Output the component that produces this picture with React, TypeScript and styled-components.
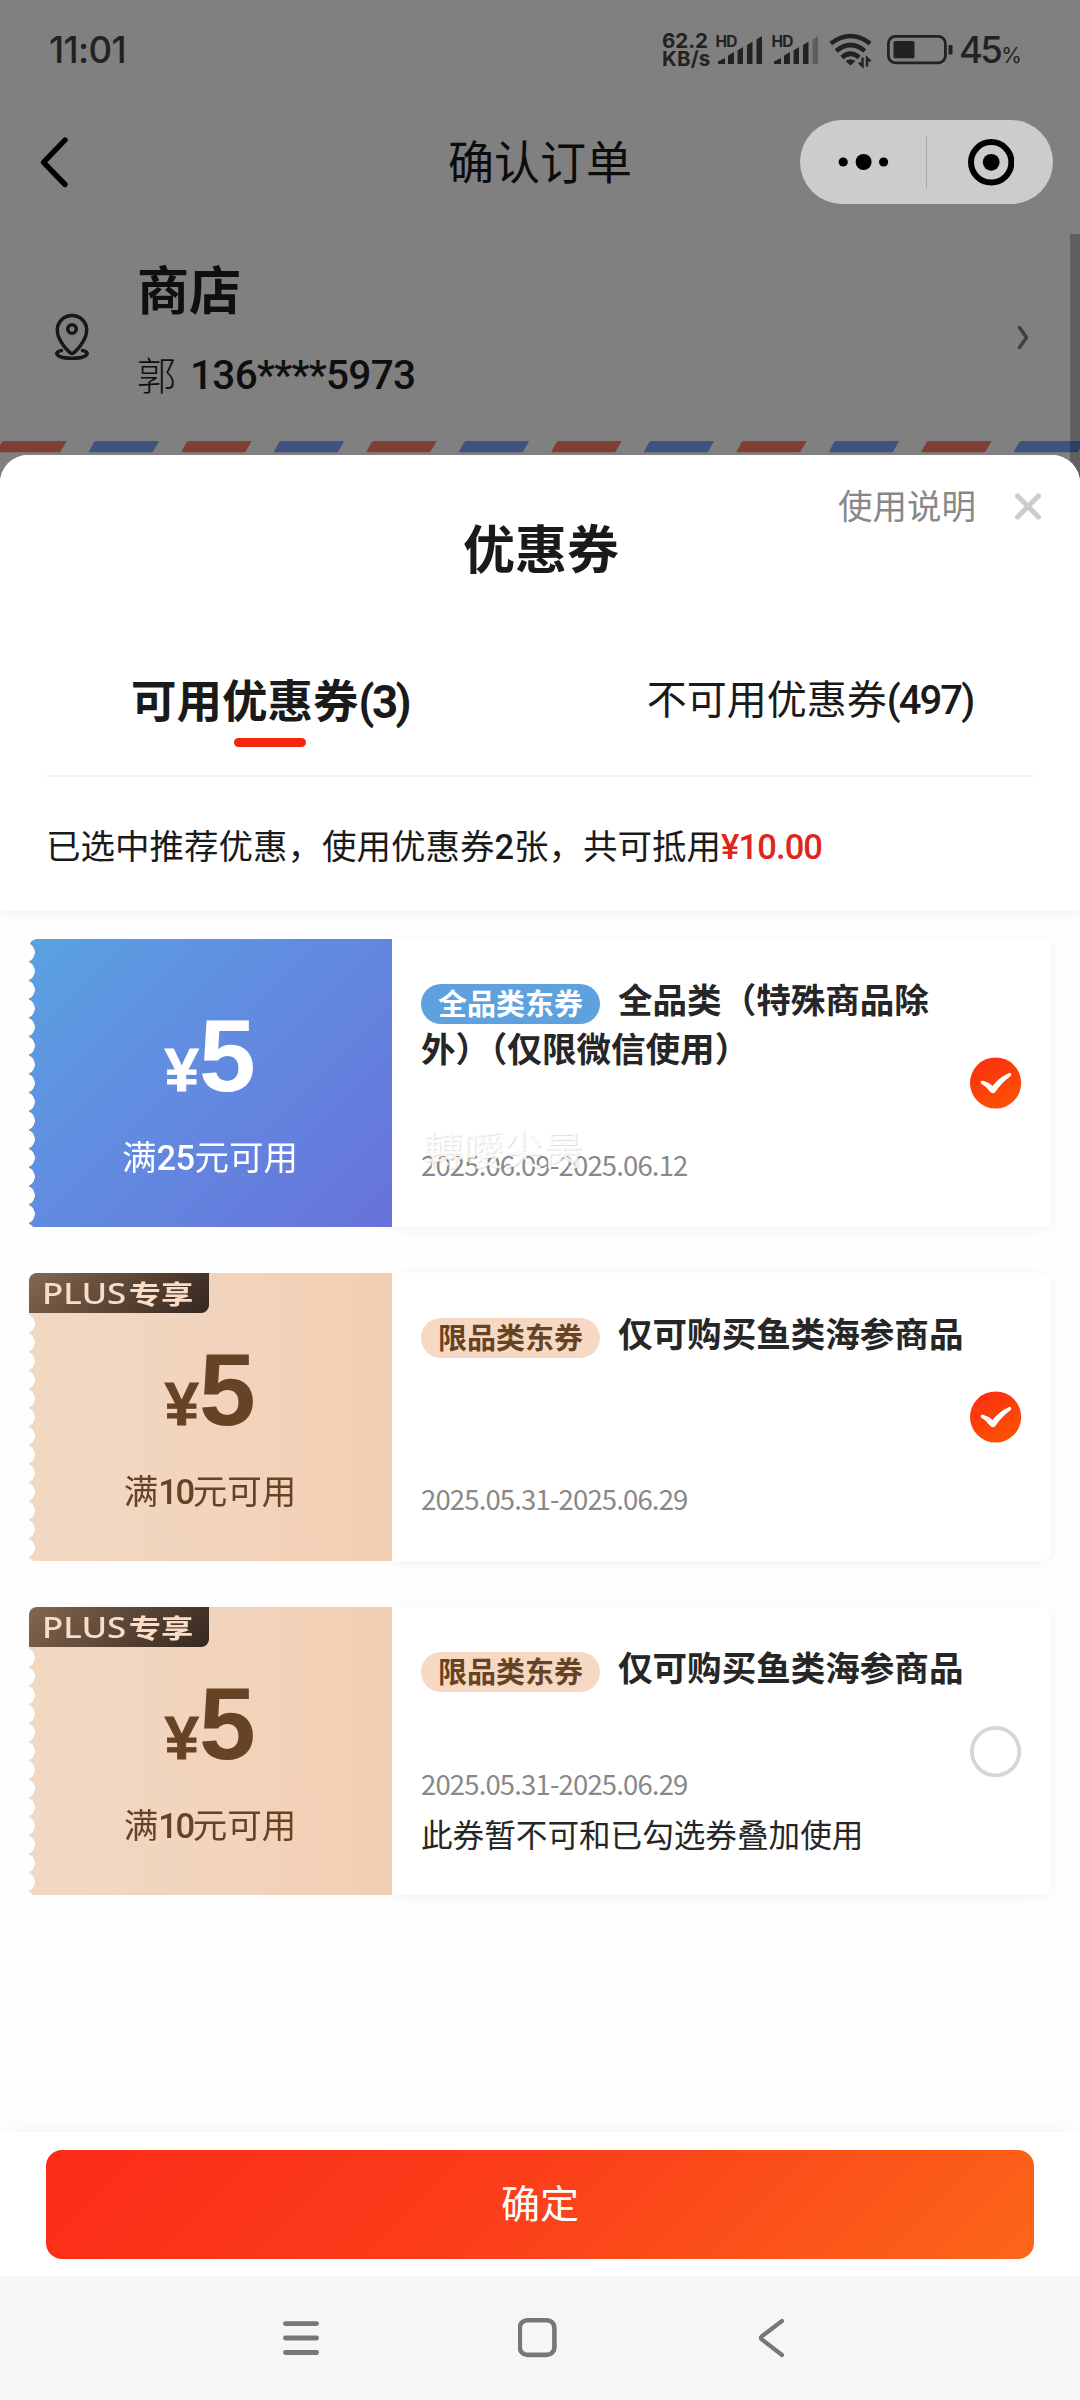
import React from "react";
import styled, { createGlobalStyle } from "styled-components";

const CJK = `"Noto Sans CJK SC", "Noto Sans", sans-serif`;

const GlobalStyle = createGlobalStyle`
  *, *::before, *::after { box-sizing: border-box; }
  html, body { margin: 0; padding: 0; }
  body { width: 1080px; background: #808080; font-family: ${CJK}; }
  svg { display: block; flex: none; }
`;

const Screen = styled.main`
  position: relative;
  display: flex;
  flex-direction: column;
  width: 1080px;
  height: 2400px;
  overflow: hidden;
  background: #808080;
  color: #1a1a1a;
`;

/* ---------- status bar ---------- */

const StatusBar = styled.header`
  display: flex;
  align-items: center;
  justify-content: space-between;
  height: 100px;
  padding: 0 61px 0 49px;
  color: #222;
`;

const Clock = styled.span`
  font: 500 36.5px/40px Inter, sans-serif;
  letter-spacing: -0.6px;
`;

const StatusIcons = styled.div`
  display: flex;
  align-items: center;
`;

const NetSpeed = styled.div`
  width: 52px;
  margin-right: 1px;
  font: 700 20.5px/18.5px Inter, sans-serif;
  white-space: nowrap;
`;

const SpeedLine = styled.div<{ $gap: number }>`
  letter-spacing: ${(p) => p.$gap}px;
`;

const BatteryLevel = styled.div`
  display: flex;
  align-items: baseline;
  width: 60px;
  margin-left: 6px;
  font: 500 36.5px/40px Inter, sans-serif;
  letter-spacing: -2.6px;
`;

const Percent = styled.span`
  margin-left: 1px;
  font: 400 21px/24px Inter, sans-serif;
`;

/* ---------- mini program navigation ---------- */

const NavBar = styled.nav`
  display: grid;
  grid-template-columns: 280px 1fr 280px;
  align-items: center;
  height: 124px;
  color: #0c0c0c;
`;

const BackButton = styled.div`
  padding-left: 38px;
`;

const PageTitle = styled.h1`
  margin: 0 0 6px;
  text-align: center;
  font: 400 46px/60px ${CJK};
`;

const Capsule = styled.div`
  display: grid;
  grid-template-columns: 126px 1px 1fr;
  align-items: center;
  justify-items: center;
  width: 253px;
  height: 84px;
  border-radius: 42px;
  background: #ccc;
`;

const CapsuleDivider = styled.span`
  width: 1px;
  height: 52px;
  background: #a6a6a6;
`;

/* ---------- delivery address ---------- */

const Address = styled.section`
  display: flex;
  align-items: center;
  height: 217px;
  padding: 8px 49px 0 54px;
  color: #0f0f0f;
`;

const AddressText = styled.div`
  flex: 1;
  margin-left: 44px;
`;

const StoreName = styled.h2`
  margin: -4px 0 10px;
  font: 700 52px/70px ${CJK};
`;

const Contact = styled.div`
  display: flex;
  align-items: center;
  gap: 14px;
  height: 84px;
  font: 300 39px/60px ${CJK};
`;

const Recipient = styled.span`
  margin-top: -4px;
`;

const Phone = styled.span`
  font: 500 40.5px/60px Roboto, sans-serif;
  letter-spacing: -0.7px;
`;

const PageScrollbar = styled.div`
  position: absolute;
  top: 234px;
  right: 0;
  width: 10px;
  height: 260px;
  background: rgba(0, 0, 0, 0.25);
`;

/* ---------- bottom sheet ---------- */

const Sheet = styled.section`
  position: relative;
  display: flex;
  flex-direction: column;
  height: 1821px;
  margin-top: 2px;
  border-radius: 28px 28px 0 0;
  background: #fefefe;
  overflow: hidden;
`;

const SheetTop = styled.div`
  height: 456px;
  background: #fff;
  box-shadow: 0 2px 14px rgba(0, 0, 0, 0.055);
`;

const SheetHeader = styled.header`
  display: grid;
  grid-template-columns: 1fr 200px 1fr;
  height: 180px;
`;

const SheetTitle = styled.h2`
  grid-column: 2;
  margin: 57px 0 0;
  padding-left: 2px;
  text-align: center;
  white-space: nowrap;
  font: 700 52px/70px ${CJK};
`;

const SheetActions = styled.div`
  display: flex;
  align-items: center;
  justify-content: flex-end;
  gap: 37px;
  height: 60px;
  margin-top: 21px;
  padding-right: 37px;
  color: #888;
`;

const HelpLink = styled.span`
  margin-top: -4px;
  font: 400 34.5px/56px ${CJK};
`;

const Tabs = styled.div`
  display: grid;
  grid-template-columns: 1fr 1fr;
  height: 142px;
  margin: 0 46px;
  border-bottom: 2px solid #f3f3f3;
`;

const Tab = styled.div<{ $active?: boolean }>`
  display: flex;
  flex-direction: column;
  align-items: center;
  padding-top: ${(p) => (p.$active ? 30 : 29)}px;
  padding-left: ${(p) => (p.$active ? 0 : 46)}px;
  padding-right: ${(p) => (p.$active ? 46 : 0)}px;
  white-space: nowrap;
  font: ${(p) => (p.$active ? "700 45.5px/66px" : "400 40px/66px")} ${CJK};
`;

const TabUnderline = styled.span`
  width: 72px;
  height: 9px;
  margin-top: 2px;
  border-radius: 5px;
  background: #f2270c;
`;

const Num = styled.span<{ $gap?: number; $heavy?: boolean }>`
  font-family: Roboto, sans-serif;
  font-weight: ${(p) => (p.$heavy ? 700 : 500)};
  letter-spacing: ${(p) => p.$gap ?? 0}px;
`;

const Summary = styled.p`
  margin: 0;
  padding: 33px 46px 0;
  font: 400 34.5px/68px ${CJK};
`;

const Saving = styled(Num)`
  color: #e1251b;
`;

/* ---------- coupons ---------- */

const CouponList = styled.div`
  display: flex;
  flex: 1;
  flex-direction: column;
  gap: 46px;
  padding: 28px 29px 0;
`;

const Card = styled.article`
  position: relative;
  display: flex;
  height: 288px;
  border-radius: 8px 10px 10px 8px;
`;

type Tone = "blue" | "plus";

const Stub = styled.div<{ $tone: Tone }>`
  display: flex;
  flex-direction: column;
  align-items: center;
  width: 363px;
  padding: 63px 1px 0 0;
  border-radius: 8px 0 0 0;
  color: ${(p) => (p.$tone === "blue" ? "#fff" : "#674326")};
  background: ${(p) =>
    p.$tone === "blue"
      ? "linear-gradient(135deg, #5aa1e1 0%, #6289e0 50%, #6872da 100%)"
      : "linear-gradient(90deg, #f2d8c2 0%, #f2d3bb 60%, #f2ceb2 100%)"};
  mask: radial-gradient(circle 10px at -4px 9.35px, transparent 9.5px, #000 10px) 0 4px / 100% 18.7px;
`;

const Amount = styled.div`
  display: flex;
  align-items: baseline;
  height: 108px;
  font: 700 102px/108px "Liberation Sans", sans-serif;
`;

const Yen = styled.span`
  font-size: 62px;
  -webkit-text-stroke: 0.8px currentColor;
`;

const Condition = styled.div`
  margin-top: 18px;
  font: 400 34.5px/54px ${CJK};
`;

const PlusBadge = styled.div`
  position: absolute;
  top: 0;
  left: 0;
  display: flex;
  align-items: center;
  width: 180px;
  height: 40px;
  padding: 0 0 1px 13px;
  border-radius: 8px 0 8px 0;
  background: linear-gradient(135deg, #836750 0%, #35271e 100%);
  color: #fbdcc5;
`;

const PlusText = styled.span`
  display: flex;
  align-items: center;
  transform: scaleX(1.22);
  transform-origin: 0 50%;
  white-space: nowrap;
  font: 700 26.5px/38px ${CJK};
`;

const PlusLatin = styled.span`
  font: 500 28.5px/38px "Noto Sans", sans-serif;
  margin-right: 2px;
`;

const Detail = styled.div`
  display: flex;
  flex: 1;
  align-items: center;
  padding: 37px 29px 37px 29px;
  border-radius: 0 10px 10px 0;
  background: #fff;
  box-shadow: 0 2px 14px rgba(0, 0, 0, 0.05);
`;

const DetailText = styled.div`
  position: relative;
  display: flex;
  flex-direction: column;
  justify-content: space-between;
  width: 549px;
  height: 214px;
  color: #262626;
`;

const CouponTitle = styled.h3`
  margin: -2px 0 0;
  font: 700 34.55px/49px ${CJK};
`;

const Tag = styled.span<{ $tone: Tone }>`
  display: inline-block;
  width: 179px;
  height: 40px;
  margin: 0 18px -6px 0;
  border-radius: 20px;
  text-align: center;
  vertical-align: -1.5px;
  font: 700 29px/37px ${CJK};
  color: ${(p) => (p.$tone === "blue" ? "#fff" : "#674326")};
  background: ${(p) => (p.$tone === "blue" ? "#5fa1df" : "#f7d9c3")};
`;

const Validity = styled.div`
  padding-bottom: 2px;
  color: #888;
  font: 400 27.5px/47px ${CJK};
  letter-spacing: -0.85px;
`;

const Note = styled.div`
  font: 400 31.6px/49px ${CJK};
`;

const Toast = styled.span`
  position: absolute;
  left: 2px;
  bottom: 14px;
  color: rgba(255, 255, 255, 0.85);
  text-shadow: 1px 1px 1px rgba(0, 0, 0, 0.13);
  font: 400 40px/56px "Noto Sans CJK TC", sans-serif;
`;

const Selector = styled.span`
  display: block;
  flex: none;
`;

/* ---------- footer ---------- */

const Footer = styled.footer`
  height: 144px;
  padding: 18px 46px;
  background: #fff;
  box-shadow: 0 -2px 18px rgba(0, 0, 0, 0.04);
`;

const ConfirmButton = styled.button`
  display: block;
  width: 100%;
  height: 109px;
  padding: 0 0 6px;
  border: 0;
  border-radius: 16px;
  background: linear-gradient(135deg, #fc2b18 0%, #fb3d1a 45%, #fb6619 100%);
  color: #fff;
  font: 400 39px/103px ${CJK};
`;

const SystemNav = styled.nav`
  display: flex;
  align-items: center;
  justify-content: space-between;
  height: 124px;
  padding: 0 293px 0 281px;
  background: #f6f6f6;
`;

/* ---------- icons ---------- */

function Signal({ weak }: { weak?: boolean }) {
  const bars = [
    [3, 58, 7],
    [13, 52, 6],
    [22.5, 47, 5.5],
    [32, 41.5, 5.5],
    [41.5, 36, 5.5],
  ];
  return (
    <svg width="56" height="40" viewBox="0 30 56 40">
      <text x="0.5" y="46.5" fontFamily="Inter, sans-serif" fontSize="15.5" fontWeight="700" fill="#222" textLength="22">
        HD
      </text>
      {bars.map(([x, y, w], i) => (
        <path
          key={x}
          d={`M${x} ${y + 3.5} L${x + w} ${y} V64 H${x} Z`}
          fill={weak && i === 4 ? "#5e5e5e" : "#222"}
        />
      ))}
    </svg>
  );
}

const WifiBox = styled.span`
  margin-left: 2px;
`;

function Wifi() {
  return (
    <WifiBox>
      <svg width="44" height="40" viewBox="0 30 44 40" fill="none" stroke="#222" strokeWidth="4.6">
        <path d="M1.8 43.5 Q21.5 28.5 41.2 43.5" />
        <path d="M7.2 51 Q21.5 39 35.8 51" />
        <path d="M12.8 57.5 Q21.5 50 30.2 57.5" />
        <path d="M16.5 61 Q21.5 57.5 26.5 61 L21.5 65.5 Z" fill="#222" stroke="none" />
        <g strokeWidth="2.4">
          <path d="M33.5 57.5 V66 L30 62.6" />
          <path d="M38 66.5 V58 L41.6 61.4" />
        </g>
      </svg>
    </WifiBox>
  );
}

const BatteryBox = styled.span`
  margin-left: 14px;
`;

function Battery() {
  return (
    <BatteryBox>
      <svg width="66" height="30" viewBox="0 0 66 30">
        <rect x="1.4" y="1.4" width="57" height="26.4" rx="7" fill="none" stroke="#222" strokeWidth="2.8" />
        <rect x="6.5" y="6" width="21" height="17.3" rx="1.5" fill="#222" />
        <rect x="61.5" y="10" width="4" height="9.5" rx="1.2" fill="#222" />
      </svg>
    </BatteryBox>
  );
}

function Check() {
  return (
    <svg width="52" height="52" viewBox="0 0 52 52">
      <defs>
        <linearGradient id="checkFill" x1="0.2" y1="0" x2="0.8" y2="1">
          <stop offset="0" stopColor="#fb2e10" />
          <stop offset="1" stopColor="#fb5404" />
        </linearGradient>
      </defs>
      <circle cx="25.6" cy="26" r="25.6" fill="url(#checkFill)" />
      <path
        d="M10.8 26.2 Q10.2 23.4 13 23.8 Q18.4 25.2 22.6 29 Q29.1 20.5 39.2 16 Q42.2 15.8 40.8 19 Q31.8 25.4 25.2 35.2 Q22.4 37.4 20 34.8 Q16 29 10.8 26.2 Z"
        fill="#fff"
      />
    </svg>
  );
}

function EmptyCircle() {
  return (
    <svg width="52" height="52" viewBox="0 0 52 52">
      <circle cx="25.6" cy="26.6" r="23.7" fill="none" stroke="#d6d6d6" strokeWidth="3.8" />
    </svg>
  );
}

function Airmail() {
  return (
    <svg width="1080" height="12" viewBox="0 0 1080 12">
      {Array.from({ length: 12 }, (_, i) => (
        <path
          key={i}
          transform={`translate(${-3.4 + i * 92.5} 0)`}
          d="M7.5 0 H69 Q70.2 0 69.6 1 L64.2 10.2 Q63.8 11.3 62.4 11.3 H1 Q-0.4 11.3 0.2 10 L4.8 1.6 Q5.6 0 7.5 0 Z"
          fill={i % 2 ? "#3f5380" : "#7f3f35"}
        />
      ))}
    </svg>
  );
}

/* ---------- data ---------- */

interface Coupon {
  tone: Tone;
  value: number;
  threshold: number;
  tag: string;
  title: string;
  validity: string;
  note?: string;
  toast?: string;
  selected: boolean;
}

const coupons: Coupon[] = [
  {
    tone: "blue",
    value: 5,
    threshold: 25,
    tag: "全品类东券",
    title: "全品类（特殊商品除外）（仅限微信使用）",
    validity: "2025.06.09-2025.06.12",
    toast: "轉噯尖昺",
    selected: true,
  },
  {
    tone: "plus",
    value: 5,
    threshold: 10,
    tag: "限品类东券",
    title: "仅可购买鱼类海参商品",
    validity: "2025.05.31-2025.06.29",
    selected: true,
  },
  {
    tone: "plus",
    value: 5,
    threshold: 10,
    tag: "限品类东券",
    title: "仅可购买鱼类海参商品",
    validity: "2025.05.31-2025.06.29",
    note: "此券暂不可和已勾选券叠加使用",
    selected: false,
  },
];

function CouponCard({ coupon }: { coupon: Coupon }) {
  return (
    <Card>
      <Stub $tone={coupon.tone}>
        <Amount>
          <Yen>¥</Yen>
          {coupon.value}
        </Amount>
        <Condition>
          满<Num $gap={coupon.tone === "plus" ? -2.4 : -0.6}>{coupon.threshold}</Num>元可用
        </Condition>
      </Stub>
      {coupon.tone === "plus" && (
        <PlusBadge>
          <PlusText>
            <PlusLatin>PLUS</PlusLatin>专享
          </PlusText>
        </PlusBadge>
      )}
      <Detail>
        <DetailText>
          <CouponTitle>
            <Tag $tone={coupon.tone}>{coupon.tag}</Tag>
            {coupon.title}
          </CouponTitle>
          <div>
            <Validity>{coupon.validity}</Validity>
            {coupon.note && <Note>{coupon.note}</Note>}
          </div>
          {coupon.toast && <Toast>{coupon.toast}</Toast>}
        </DetailText>
        <Selector>{coupon.selected ? <Check /> : <EmptyCircle />}</Selector>
      </Detail>
    </Card>
  );
}

export default function App() {
  return (
    <Screen>
      <GlobalStyle />
      <StatusBar>
        <Clock>11:01</Clock>
        <StatusIcons>
          <NetSpeed>
            <SpeedLine $gap={0}>62.2</SpeedLine>
            <SpeedLine $gap={0.2}>KB/s</SpeedLine>
          </NetSpeed>
          <Signal />
          <Signal weak />
          <Wifi />
          <Battery />
          <BatteryLevel>
            45<Percent>%</Percent>
          </BatteryLevel>
        </StatusIcons>
      </StatusBar>

      <NavBar>
        <BackButton>
          <svg width="32" height="54" viewBox="0 0 32 54" fill="none" stroke="#000" strokeWidth="5.4" strokeLinecap="round" strokeLinejoin="round">
            <path d="M27 5 L5.5 27.3 L27 49.5" />
          </svg>
        </BackButton>
        <PageTitle>确认订单</PageTitle>
        <Capsule>
          <svg width="52" height="20" viewBox="0 0 52 20">
            <circle cx="6.2" cy="10" r="4.6" />
            <circle cx="26.6" cy="10" r="8" />
            <circle cx="46.6" cy="10" r="4.6" />
          </svg>
          <CapsuleDivider />
          <svg width="48" height="48" viewBox="0 0 48 48">
            <circle cx="25.2" cy="24.3" r="20.2" fill="none" stroke="#000" strokeWidth="6" />
            <circle cx="25.2" cy="24.3" r="8.4" />
          </svg>
        </Capsule>
      </NavBar>

      <Address>
        <svg width="39" height="50" viewBox="0 0 39 50" fill="none" stroke="#171717" strokeWidth="3.5" strokeLinecap="round" strokeLinejoin="round">
          <path d="M18 41.5 C15.5 41.5 3.3 28.5 3.3 18.2 C3.3 9.8 9.9 3.6 18 3.6 S32.7 9.8 32.7 18.2 C32.7 28.5 20.5 41.5 18 41.5 Z" />
          <circle cx="18" cy="17" r="4.3" />
          <path d="M7.5 38.5 C-1 40 2 46.3 18 46.3 S37 40 28.5 38.5" />
        </svg>
        <AddressText>
          <StoreName>商店</StoreName>
          <Contact>
            <Recipient>郭</Recipient>
            <Phone>136****5973</Phone>
          </Contact>
        </AddressText>
        <svg width="14" height="28" viewBox="0 0 14 28" fill="none" stroke="#3e3e3e" strokeWidth="3.4" strokeLinecap="round" strokeLinejoin="round">
          <path d="M2.5 4.5 L9.6 14.5 L2.5 24.5" />
        </svg>
      </Address>
      <Airmail />
      <PageScrollbar />

      <Sheet>
        <SheetTop>
          <SheetHeader>
            <SheetTitle>优惠券</SheetTitle>
            <SheetActions>
              <HelpLink>使用说明</HelpLink>
              <svg width="30" height="30" viewBox="0 0 30 30" stroke="#ccc" strokeWidth="5" strokeLinecap="round">
                <path d="M4.5 5 L25.5 26 M25.5 5 L4.5 26" />
              </svg>
            </SheetActions>
          </SheetHeader>
          <Tabs>
            <Tab $active>
              <span>
                可用优惠券<Num $heavy $gap={-2.5}>(3)</Num>
              </span>
              <TabUnderline />
            </Tab>
            <Tab>
              <span>
                不可用优惠券<Num $gap={-1.9}>(497)</Num>
              </span>
            </Tab>
          </Tabs>
          <Summary>
            已选中推荐优惠，使用优惠券<Num>2</Num>张，共可抵用<Saving $gap={-0.9}>¥10.00</Saving>
          </Summary>
        </SheetTop>
        <CouponList>
          {coupons.map((c, i) => (
            <CouponCard key={i} coupon={c} />
          ))}
        </CouponList>
        <Footer>
          <ConfirmButton>确定</ConfirmButton>
        </Footer>
      </Sheet>

      <SystemNav>
        <svg width="40" height="40" viewBox="0 0 40 40" stroke="#777" strokeWidth="4.8" strokeLinecap="round">
          <path d="M4.4 5.6 H35.6 M4.4 20 H35.6 M4.4 34.5 H35.6" />
        </svg>
        <svg width="42" height="42" viewBox="0 0 42 42" fill="none" stroke="#777" strokeWidth="4.6">
          <rect x="1.8" y="3.3" width="34.6" height="34.6" rx="7.5" />
        </svg>
        <svg width="30" height="42" viewBox="0 0 30 42" fill="none" stroke="#777" strokeWidth="4.2" strokeLinecap="round" strokeLinejoin="round">
          <path d="M25 4 L4.8 19.2 Q3 20.8 4.8 22.4 L25 38" />
        </svg>
      </SystemNav>
    </Screen>
  );
}
